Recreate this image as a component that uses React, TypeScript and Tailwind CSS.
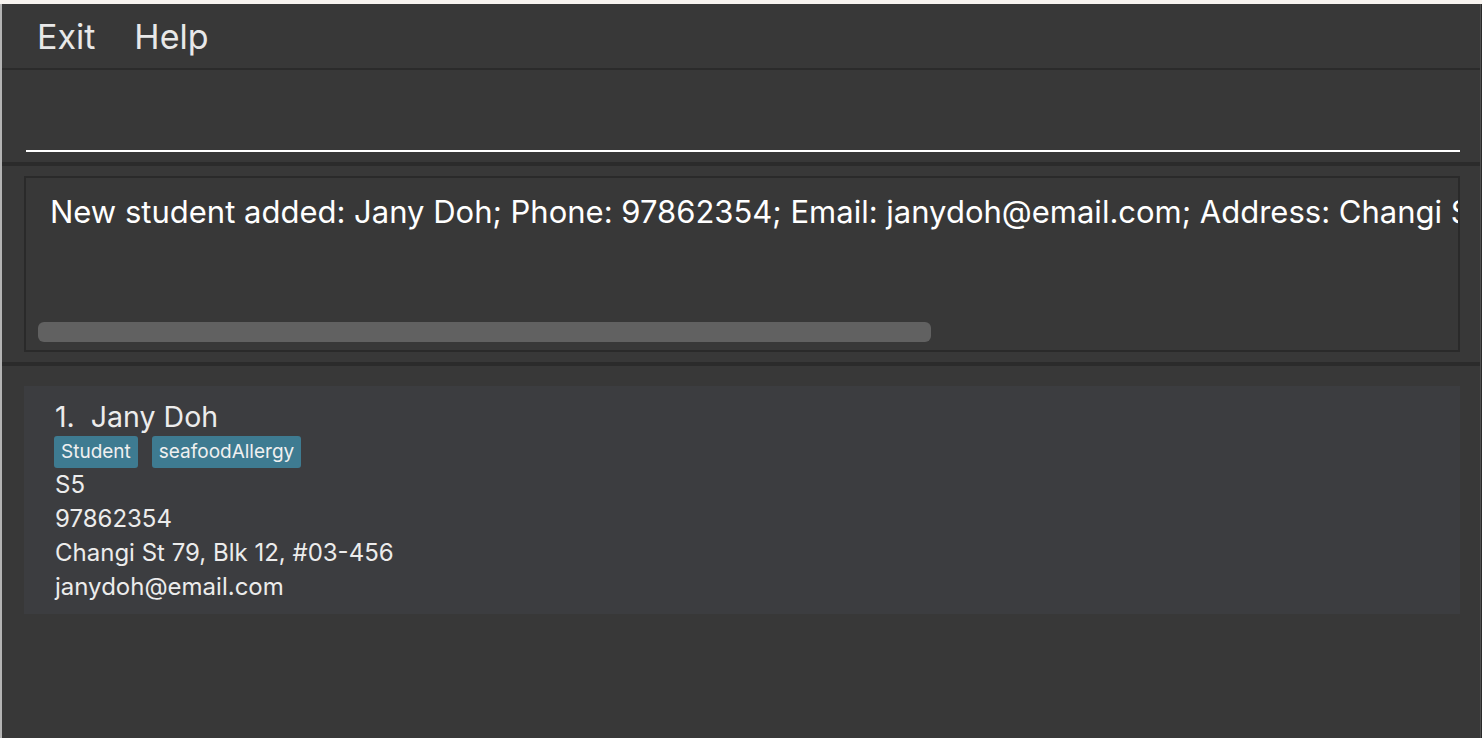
const font = { fontFamily: "Inter, 'Noto Sans', sans-serif" };

function Tag({ label }: { label: string }) {
  return (
    <span className="h-[32px] px-[7px] rounded-[3px] bg-[#3e7b91] text-[19px] leading-[32px] text-[#f0f0f0]">
      {label}
    </span>
  );
}

function PersonCard() {
  return (
    <div className="bg-[#3c3d40] pl-[31px] pt-[13px] pb-[10px] h-[228px] text-[#ececec]">
      <div className="text-[28.5px] leading-[36px]">1.&nbsp;&nbsp;Jany Doh</div>
      <div className="flex gap-[14px] mt-[1px] -ml-[1px]">
        <Tag label="Student" />
        <Tag label="seafoodAllergy" />
      </div>
      <div className="text-[24px] leading-[34px]">
        <div>S5</div>
        <div>97862354</div>
        <div>Changi St 79, Blk 12, #03-456</div>
        <div>janydoh@email.com</div>
      </div>
    </div>
  );
}

export default function App() {
  return (
    <div className="w-[1482px] h-[738px] flex flex-col bg-[#f7f3ef] overflow-hidden" style={font}>
      <div className="h-[4px] shrink-0" />
      <div className="flex flex-1 min-h-0">
        {/* window edge on the left */}
        <div className="w-[2px] bg-[#b4b4b4] shrink-0" />
        <div className="flex-1 flex flex-col bg-[#383838] min-w-0">
          {/* menu bar */}
          <div className="h-[64px] flex items-center gap-[39px] pl-[35px] text-[34px] text-[#e8e8e8] shrink-0">
            <span>Exit</span>
            <span>Help</span>
          </div>
          <div className="h-[2px] bg-[#2b2b2b] shrink-0" />

          {/* command box */}
          <div className="h-[92px] flex flex-col justify-end pl-[24px] pr-[20px] pb-[10px] shrink-0">
            <div className="h-[2px] bg-white" />
          </div>
          <div className="h-[4px] bg-[#2b2b2b] shrink-0" />

          {/* result display */}
          <div className="h-[196px] pt-[10px] pl-[22px] pr-[20px] pb-[10px] shrink-0">
            <div className="h-full border-2 border-[#2a2a2a] flex flex-col overflow-hidden">
              <div className="pl-[24px] pt-[14px] text-[31px] leading-[40px] text-white whitespace-nowrap overflow-hidden">
                New student added: Jany Doh; Phone: 97862354; Email: janydoh@email.com; Address: Changi St 79, Blk 12, #03-456; Tags: [Student][seafoodAllergy]
              </div>
              <div className="flex-1" />
              <div className="pl-[12px] pb-[8px]">
                <div className="w-[893px] h-[20px] rounded-[6px] bg-[#616161]" />
              </div>
            </div>
          </div>
          <div className="h-[4px] bg-[#2b2b2b] shrink-0" />

          {/* person list */}
          <div className="flex-1 pt-[20px] pl-[22px] pr-[20px]">
            <PersonCard />
          </div>
        </div>
        {/* window edge on the right */}
        <div className="w-[2px] flex shrink-0">
          <div className="w-[1px] bg-[#505050]" />
          <div className="w-[1px] bg-[#2a2a2a]" />
        </div>
      </div>
    </div>
  );
}
